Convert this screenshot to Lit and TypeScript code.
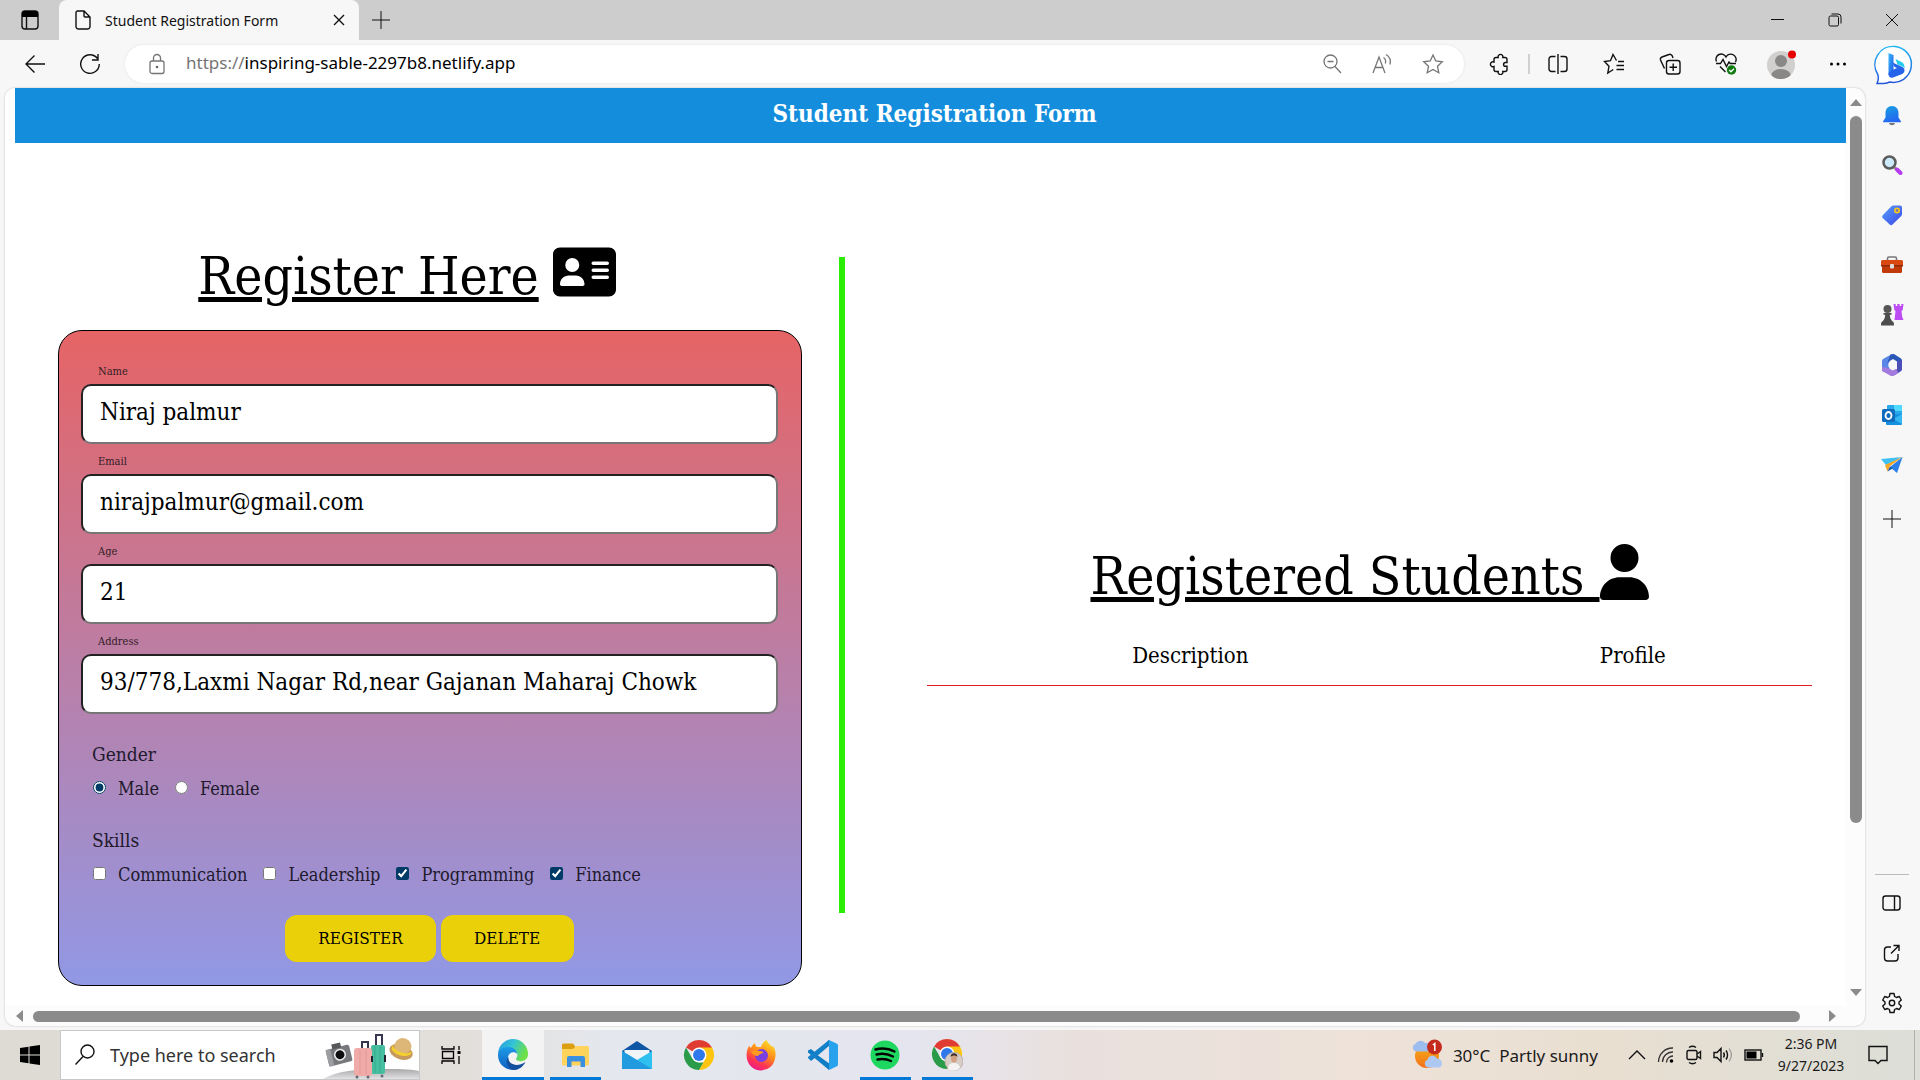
import { LitElement, html, svg, css, TemplateResult, SVGTemplateResult } from "lit";
import { customElement, state } from "lit/decorators.js";

const icon = (w: number, h: number, body: SVGTemplateResult): TemplateResult =>
  html`<svg class="icon" width=${w} height=${h} viewBox="0 0 ${w} ${h}" aria-hidden="true">${body}</svg>`;

/* ---------- browser chrome ---------- */
const tabActions = icon(20, 24, svg`<rect x="2" y="3" width="16" height="18" rx="3" class="ln"/><path d="M2 9V6a3 3 0 0 1 3-3h10a3 3 0 0 1 3 3v3z" fill="#000"/><path d="M6.5 9v12" class="ln"/>`);
const docIcon = icon(20, 24, svg`<path d="M4 3h7l6 6v9.5a2.5 2.5 0 0 1-2.5 2.500h-9A2.500 2.500 0 0 1 3 18.500V4.500A1.500 1.500 0 0 1 4.500 3zM11 3v5a1 1 0 0 0 1 1h5" class="ln"/>`);
const closeTab = icon(14, 14, svg`<path d="M2 2l10 10M12 2L2 12" class="ln"/>`);
const plusIcon = icon(18, 18, svg`<path d="M9 0v18M0 9h18" class="ln thin"/>`);
const minimize = icon(14, 14, svg`<path d="M0 6.500h13" class="ln thin"/>`);
const restore = icon(14, 14, svg`<rect x="1" y="3" width="9.500" height="10" rx="1.500" class="ln thin"/><path d="M3.500 1h6.500a3 3 0 0 1 3 3v6.500" class="ln thin"/>`);
const closeWin = icon(14, 14, svg`<path d="M1 1l12 12M13 1L1 13" class="ln thin"/>`);
const back = icon(22, 20, svg`<path d="M21 10H2M10.500 1.500L2 10l8.500 8.500" class="ln"/>`);
const refresh = icon(22, 24, svg`<path d="M18.500 6.500A9.300 9.300 0 1 0 20.300 12M19 2v6h-6" class="ln"/>`);
const lock = icon(18, 22, svg`<g class="gr"><rect x="2" y="8" width="14" height="12.500" rx="2"/><path d="M5.500 8V5a3.500 3.500 0 0 1 7 0v3"/></g><circle cx="9" cy="14" r="1.300" fill="#666"/>`);
const zoomOut = icon(20, 22, svg`<g class="gr"><circle cx="8.500" cy="8.500" r="6.500"/><path d="M13 13.500l6 6.500M5.500 8.500h6"/></g>`);
const readAloud = icon(22, 22, svg`<g class="gr"><path d="M2 20L8 4l6 16M4 14.500h8M12.500 4.500c2 1.500 2.500 4 1.800 6M15 1.500c4 2.500 5 6.500 4 10"/></g>`);
const starPath = "M11 2l2.800 6 6.500.8-4.800 4.500 1.300 6.500L11 16.500l-5.800 3.300 1.300-6.500L1.700 8.800 8.200 8z";
const star = icon(22, 22, svg`<path d=${starPath} class="gr"/>`);
const puzzle = icon(22, 22, svg`<path d="M7 4.500h2.200a2.400 2.400 0 1 1 4.600 0H16a2 2 0 0 1 2 2v3h-1.500a1.800 1.800 0 0 0 0 3.800H18v3.200a2 2 0 0 1-2 2h-2.200a2.400 2.400 0 1 1-4.600 0H7a2 2 0 0 1-2-2v-3a2.500 2.500 0 1 1 0-4.500V6.500a2 2 0 0 1 2-2z" class="ln"/>`);
const split = icon(20, 22, svg`<path d="M7.500 3.500h-4A2.500 2.500 0 0 0 1 6v10a2.500 2.500 0 0 0 2.500 2.500h4M12.500 3.500h4A2.500 2.500 0 0 1 19 6v10a2.500 2.500 0 0 1-2.500 2.500h-4M10 1v20" class="ln"/>`);
const favs = icon(22, 22, svg`<path d="M13.500 7.500L10 1.500 7.500 7.700 1.500 8.500l4.500 4.800L4.800 20l5.500-3.500M15 8.500h6M13.500 12.500H21M13.500 16.500H21" class="ln"/>`);
const collections = icon(22, 22, svg`<path d="M5.500 15.500L1.500 7A2.500 2.500 0 0 1 3 4l7-2.500a2.500 2.500 0 0 1 3.300 1.500l.7 2" class="ln"/><rect x="7.500" y="7.500" width="13.500" height="13.500" rx="2.500" class="ln"/><path d="M14.200 10.500v7.500M10.500 14.200H18" class="ln"/>`);
const heart = icon(22, 24, svg`<path d="M1.500 9.500A5 5 0 0 1 11 5a5 5 0 0 1 9.500 5M1 11.500h4.500l2.500-4 3.500 7 2.500-4.500 1.200 1.500H21M5 14.500l5.500 5.500" class="ln"/><circle cx="16.500" cy="18" r="4.700" fill="#107c10"/><path d="M14.300 18l1.700 1.700 2.900-3" fill="none" stroke="#fff" stroke-width="1.300"/>`);
const profile = icon(32, 32, svg`<defs><clipPath id="pc"><circle cx="15" cy="17" r="14"/></clipPath></defs><circle cx="15" cy="17" r="14" fill="#d2d0ce"/><g clip-path="url(#pc)" fill="#8a8886"><circle cx="15" cy="13" r="6"/><ellipse cx="15" cy="28" rx="10" ry="7"/></g><circle cx="26" cy="6.500" r="4" fill="#e80000"/>`);
const dots = icon(18, 6, svg`<circle cx="2.500" cy="3" r="1.500"/><circle cx="9" cy="3" r="1.500"/><circle cx="15.500" cy="3" r="1.500"/>`);

/* ---------- sidebar ---------- */
const bing = icon(44, 40, svg`<defs><linearGradient id="b1" x1="0" y1="0" x2="0" y2="1"><stop offset="0" stop-color="#1fb6f5"/><stop offset="1" stop-color="#2456d8"/></linearGradient><linearGradient id="b2" x1="0" y1="0" x2="1" y2="1"><stop offset="0" stop-color="#37bdff"/><stop offset="1" stop-color="#2052e0"/></linearGradient></defs><g transform="translate(5 0)"><path d="M20 1.500a18 18 0 1 1-5.500 35.500c-3.500 1.800-7 1.800-12.500 1.500 1.500-3.500 1.800-6 .8-9A18.200 18.200 0 0 1 20 1.500z" fill="#fff" stroke="url(#b1)" stroke-width="1.500"/><path d="M13.500 8l5 2v15.500l-5 4.500z" fill="url(#b2)"/><path d="M13.500 28l5-3.500 3.500-1.500-3-1.500-1.500-4 10 4.500c1.500.8 2 2 2 3.500s-1 2.800-2.200 3.500L18 32.500c-2.500 1-4.500-1-4.500-3.500z" fill="#2563e8"/><path d="M20.500 14l6 3c2 1 3.500 3 3 6.500-.5-1.200-1.500-2-3-2.500l-4-1.500z" fill="#24ccec"/></g>`);
const bell = icon(22, 24, svg`<defs><linearGradient id="bl" x1="0" y1="0" x2="0.300" y2="1"><stop offset="0" stop-color="#17a0e0"/><stop offset="1" stop-color="#2468f2"/></linearGradient></defs><path d="M11 3c4 0 6.500 3 6.500 7v4.500l2.500 4v.8H2v-.8l2.500-4V10c0-4 2.500-7 6.500-7z" fill="url(#bl)"/><path d="M8 20h6c-.5 3-5.500 3-6 0z" fill="#777"/>`);
const sSearch = icon(22, 22, svg`<path d="M13.500 13.500l1.500 1.500" stroke="#888" stroke-width="3"/><path d="M16 15.500l3.500 3.500" stroke="#b63cf2" stroke-width="4" stroke-linecap="round"/><circle cx="8.500" cy="8.500" r="6" fill="#cdeafa" stroke="#5c5c5c" stroke-width="2.500"/>`);
const tag = icon(22, 22, svg`<defs><linearGradient id="tg" x1="0" y1="0" x2="1" y2="1"><stop offset="0" stop-color="#55a0fa"/><stop offset="1" stop-color="#3d45e8"/></linearGradient></defs><path d="M12.500 1.500H19A2 2 0 0 1 21 3.500V10a3 3 0 0 1-1 2.300L11.500 20.500a2 2 0 0 1-2.800 0l-7-6.500a2 2 0 0 1 0-2.800l8.500-8.700a3 3 0 0 1 2.300-1z" fill="url(#tg)"/><circle cx="16" cy="6.500" r="2.200" fill="#7e75b8" stroke="#fbc916" stroke-width="1.600"/>`);
const toolbox = icon(24, 20, svg`<path d="M7.500 6V3.500A1.500 1.500 0 0 1 9 2h6a1.500 1.500 0 0 1 1.500 1.500V6" fill="none" stroke="#777" stroke-width="1.600"/><path d="M1 6.500A1.500 1.500 0 0 1 2.500 5h19A1.500 1.500 0 0 1 23 6.500V11H1z" fill="#d9480f"/><path d="M2 11h20v5.500a1.500 1.500 0 0 1-1.500 1.500h-17A1.500 1.500 0 0 1 2 16.500z" fill="#c23a0a"/><path d="M1 10h22v1.500H1z" fill="#8f2a06"/><rect x="10" y="9" width="4" height="4.500" rx="1" fill="#ddd"/>`);
const chess = icon(24, 24, svg`<path d="M13.500 1h2.200v2h1.600V1h2.400v2h1.600V1H23.500l-.8 6-1.200 1 .7 6 1.300 3h-9l1-9-1.200-1z" fill="#bd4cf5"/><circle cx="7.500" cy="6" r="4" fill="#555"/><path d="M3.500 10h8v1.800h-1.700c0 3 1.200 5.500 3.200 7 .8.700 1 1.700 1 3.700H1c0-2 .2-3 1-3.700 2-1.500 3.200-4 3.200-7H3.500z" fill="#4d4d4d"/>`);
const m365 = icon(22, 24, svg`<path d="M11 1l4 2.300L8.500 8v8L2 19 1 17V7.500L2 6z" fill="#5a86e8"/><path d="M9.500 1.500L13 1l7 4.500L21 7v8l-5-3V8.500l-4-2.500-3.500 2L6 11z" fill="#2a57b8"/><path d="M21 7v10l-1.500 1.500L13 22.500 9 21l7-5V8z" fill="#4b50b8"/><path d="M1 14l6.500 1 4 2.500 3.500-1.500 2.500 4L12 23h-2l-8-4.500-1-1.500z" fill="#a279dc"/><circle cx="11" cy="12" r="3.700" fill="#f7f7f7"/>`);
const outlook = icon(22, 22, svg`<rect x="6" y="1" width="15" height="12" rx="1" fill="#28a8ea"/><rect x="13" y="1" width="8" height="6" fill="#50d9ff"/><path d="M5 11l16-1v10a1 1 0 0 1-1 1H6a1 1 0 0 1-1-1z" fill="#1490df"/><path d="M12 15l9-5v10z" fill="#35b8f1"/><rect x="1" y="5" width="13" height="13" rx="1.500" fill="#0f6cbd"/><ellipse cx="7.500" cy="11.500" rx="3" ry="3.500" fill="none" stroke="#fff" stroke-width="1.800"/>`);
const plane = icon(22, 20, svg`<path d="M21.500 2L0 4l5 6z" fill="#3fc0f4"/><path d="M21.500 2L9 12l7 6z" fill="#2b7de9"/><path d="M21.500 2L4 10l2.500 6.500L9 11z" fill="#f5a623"/><path d="M6.500 16.500L9 11.500l2.500 2z" fill="#0f57a8"/>`);
const sidePanel = icon(20, 18, svg`<rect x="1" y="2" width="17" height="14" rx="2.500" class="ln"/><path d="M12.500 2v14" class="ln"/>`);
const openExt = icon(20, 20, svg`<path d="M9 4H5.500A3 3 0 0 0 2.500 7v8a3 3 0 0 0 3 3H13a3 3 0 0 0 3-3v-4M11.500 2.500H17V8M17 2.500l-8 8" class="ln"/>`);
const gear = icon(22, 22, svg`<path d="M9 1.500h4l.6 3 1.800 1 2.900-1 2 3.500-2.300 2v2l2.300 2-2 3.500-2.900-1-1.800 1-.6 3H9l-.6-3-1.800-1-2.900 1-2-3.500L4 12v-2L1.700 8l2-3.500 2.900 1 1.800-1z" class="ln" stroke-linejoin="round"/><circle cx="11" cy="11" r="2.700" class="ln"/>`);

/* ---------- page ---------- */
const idCard = html`<svg width="63" height="56" viewBox="0 0 576 512" aria-hidden="true"><path fill-rule="evenodd" d="M64 32C28.700 32 0 60.700 0 96V416c0 35.300 28.700 64 64 64H512c35.300 0 64-28.700 64-64V96c0-35.300-28.700-64-64-64H64zm80 256h64c44.200 0 80 35.800 80 80c0 8.800-7.200 16-16 16H80c-8.800 0-16-7.200-16-16c0-44.200 35.800-80 80-80zm-32-96a64 64 0 1 1 128 0 64 64 0 1 1-128 0zm256-32H496a16 16 0 0 1 0 32H368a16 16 0 0 1 0-32zm0 64H496a16 16 0 0 1 0 32H368a16 16 0 0 1 0-32zm0 64H496a16 16 0 0 1 0 32H368a16 16 0 0 1 0-32z"/></svg>`;
const person = html`<svg width="49" height="56" viewBox="0 0 448 512" aria-hidden="true"><path d="M224 256A128 128 0 1 0 224 0a128 128 0 1 0 0 256zm-45.700 48C79.800 304 0 383.800 0 482.300C0 498.700 13.300 512 29.700 512H418.300c16.400 0 29.700-13.300 29.700-29.700C448 383.800 368.200 304 269.700 304H178.300z"/></svg>`;

/* ---------- taskbar ---------- */
const start = icon(20, 20, svg`<path d="M0 3l8.500-1.200V9.500H0zM9.500 1.600L20 0v9.500H9.500zM0 10.500h8.500v7.700L0 17zM9.500 10.500H20V20L9.500 18.400z"/>`);
const tSearch = icon(22, 22, svg`<circle cx="13.500" cy="7.500" r="6.500" class="ln"/><path d="M9 12.500L1.500 20.500" class="ln"/>`);
const travel = icon(96, 48, svg`<defs><linearGradient id="hill" x1="0" y1="0" x2="0" y2="1"><stop offset="0" stop-color="#a9a9ab"/><stop offset="1" stop-color="#e2e2e4"/></linearGradient></defs><path d="M0 48c14-8 34-10 58-10 16 0 28 0 38 2v8z" fill="url(#hill)"/>
<g transform="rotate(-14 16 24)"><rect x="4" y="16" width="24" height="17" rx="2" fill="#77797c"/><rect x="11" y="12" width="9" height="5" fill="#55575a"/><rect x="4" y="16" width="5" height="17" fill="#9b9da0"/><circle cx="17" cy="24" r="6" fill="#ececec"/><circle cx="17" cy="24" r="4.500" fill="#0c0c0f"/></g>
<path d="M53 15V4h6v11" fill="none" stroke="#363650" stroke-width="2"/><rect x="48" y="14" width="14" height="29" rx="2" fill="#46bfa0"/><path d="M52 15v27M57 15v27" stroke="#3aa98d"/><path d="M39 19V11h6v8" fill="none" stroke="#363650" stroke-width="2"/><rect x="31" y="17" width="18" height="28" rx="3" fill="#f0aaa8"/><path d="M37 19v24M43 19v24" stroke="#e39a98"/><path d="M49 25v6M62 24v7" stroke="#223" stroke-width="2"/><circle cx="34" cy="46" r="1.500" fill="#667"/><circle cx="45" cy="46" r="1.500" fill="#667"/><circle cx="59" cy="45" r="1.500" fill="#667"/>
<g transform="rotate(18 79 18)"><ellipse cx="79" cy="21" rx="12" ry="7.500" fill="#c69a5c"/><ellipse cx="79" cy="15" rx="8.500" ry="8" fill="#ddb778"/><path d="M69 17c3 6 17 6 20 0v3c-3 6-17 6-20 1z" fill="#f5cf2e"/></g>`);
const taskView = icon(20, 20, svg`<path d="M1 1v3h12V1M1 19v-3h12v3M1.500 6.500h11v7h-11zM18 1v4M18 11v8" fill="none" stroke="#000" stroke-width="1.300"/><rect x="16.500" y="6" width="3" height="3"/>`);
const edge = icon(32, 32, svg`<defs><linearGradient id="e1" x1="0" y1="0" x2="1" y2="0.400"><stop offset="0" stop-color="#2796e0"/><stop offset="0.500" stop-color="#33c3d8"/><stop offset="1" stop-color="#6ee048"/></linearGradient><linearGradient id="e2" x1="0" y1="0" x2="0" y2="1"><stop offset="0" stop-color="#1d9be8"/><stop offset="1" stop-color="#0f5fc0"/></linearGradient></defs><path d="M1 15A15 15 0 0 1 31 15c.2 5-4 7.500-8 7.200-3-.2-5-1.500-3.500-3.200C22 15 19 11 14 11 8 11 2 12 1 15z" fill="url(#e1)"/><path d="M1 16c0-4 4-8 10-8 5 0 9 3 9 7-2-3-9-2-9 4 0 6 5 9 10 11-8 3-20-2-20-14z" fill="url(#e2)"/><path d="M11.500 18c-1 7 8 11 17 5-2.500 5-7 8-12 8-6-1-9-9-5-13z" fill="#124f9c"/>`);
const explorer = icon(30, 28, svg`<path d="M2 4a1.500 1.500 0 0 1 1.500-1.500H13L15 5v4H2z" fill="#dd9f10"/><path d="M2 8h11l3-3h11.500A1.500 1.500 0 0 1 29 6.500V23a1.500 1.500 0 0 1-1.500 1.500h-24A1.500 1.500 0 0 1 2 23z" fill="#ffd35c"/><path d="M7 26V17a2 2 0 0 1 2-2h14a2 2 0 0 1 2 2v9h-4.500v-5.500h-9V26z" fill="#3b8fe0"/>`);
const mail = icon(32, 30, svg`<path d="M1 11L16 1l15 10v3H1z" fill="#0f57a4"/><path d="M3.500 10h25v10h-25z" fill="#f2f5f8"/><path d="M1 11l15 9 15-9v18H1z" fill="#2fc0f0"/><path d="M1 11l30 18H1z" fill="#219ae0"/>`);
const chromeBody = svg`<path d="M16 16L3 8.500A15 15 0 0 1 29 8.500z" fill="#e03c31"/><path d="M16 8.500h13A15 15 0 0 1 16 31l6.500-11.500z" fill="#fdc50f"/><path d="M3 8.500L9.500 19.700 16 23.500h4.300L16 31A15 15 0 0 1 3 8.500z" fill="#2a9b48"/><circle cx="16" cy="16" r="7.500" fill="#fff"/><circle cx="16" cy="16" r="6" fill="#2f78ec"/>`;
const chrome = icon(32, 32, chromeBody);
const chromeUser = icon(32, 34, svg`${chromeBody}<circle cx="23" cy="23.500" r="9" fill="#d8cdc6" stroke="#b8b0aa"/><path d="M17 31c0-5 3-6 6-6s6 2 6 5a9 9 0 0 1-12 1z" fill="#f4f2f2"/><ellipse cx="23" cy="20.500" rx="3" ry="4" fill="#d2a184"/><path d="M19.500 19c0-5 7-5 7 0-2-2-5-2-7 0z" fill="#3a2a26"/>`);
const firefox = icon(32, 32, svg`<defs><linearGradient id="f1" x1="0.800" y1="0" x2="0.300" y2="1"><stop offset="0" stop-color="#ffe226"/><stop offset="0.450" stop-color="#ff8a1c"/><stop offset="0.750" stop-color="#ff3750"/><stop offset="1" stop-color="#e8178a"/></linearGradient></defs><path d="M4 7l2 2c1-3 3-4 4-5 0 2 1 3 2 4h4c1-3 3-6 6-7 0 3 3 4 5 7l1-1c3 4 3 9 2 13a14.300 14.300 0 0 1-28 0C1 15 2 10 4 7z" fill="url(#f1)"/><circle cx="16.500" cy="16.500" r="6.500" fill="#7a3fe0"/><path d="M6 12c3-1 6-1 8 0 3 0 5 1 4 2-2 1-4 1-5 3-2 0-6-1-7-5z" fill="#ff9a20"/>`);
const vscode = icon(32, 32, svg`<path d="M22 1l-13 13-5-4-3 1.500v2L22 31l1-6-14-10 14-9z" fill="#0f7cc4"/><path d="M1 19l3 3 5-4L23 6l-1-5L1 18z" fill="#1380c8"/><path d="M22 1l7.500 3.500A2 2 0 0 1 31 6.500v19a2 2 0 0 1-1.500 2L22 31z" fill="#29a2ee"/>`);
const spotify = icon(30, 30, svg`<circle cx="15" cy="15" r="14.500" fill="#1ed760"/><path d="M5.500 9.500c7-2 13.500-1 19 2M6.500 14.500c6-1.500 11.500-.8 16.500 2M7.500 19.500c5-1 9-.7 13.500 1.500" fill="none" stroke="#000" stroke-width="2.400" stroke-linecap="round"/>`);
const weather = icon(32, 32, svg`<defs><linearGradient id="sun" x1="0" y1="0" x2="0" y2="1"><stop offset="0" stop-color="#f6b216"/><stop offset="1" stop-color="#f2701c"/></linearGradient></defs><circle cx="15" cy="17" r="12" fill="url(#sun)"/><path d="M4 12.500a4 4 0 0 1-.5-7.700A5.500 5.500 0 0 1 13 4a4 4 0 0 1 3 8.500z" fill="#9dbdee"/><path d="M16 28.500a4 4 0 0 1-.5-7.700 5 5 0 0 1 9.500-1 4.500 4.500 0 0 1 2 8.700z" fill="#adc9f3"/><circle cx="22.500" cy="8" r="7.500" fill="#c42b1c"/><path d="M20.800 6l2-1.500V12" fill="none" stroke="#fff" stroke-width="1.500"/>`);
const chevron = icon(18, 12, svg`<path d="M1 10l8-8 8 8" class="ln"/>`);
const wifi = icon(18, 18, svg`<path d="M1.500 16A14 14 0 0 1 16 2M5.500 16A10 10 0 0 1 16 6M9.500 16.500A6.500 6.500 0 0 1 16 10" fill="none" stroke="#333" stroke-width="1.300"/><circle cx="14.500" cy="15" r="1.800"/>`);
const meet = icon(16, 20, svg`<rect x="1" y="5.500" width="10" height="9" rx="1.500" class="ln"/><path d="M11 9l3.500-2.500v7L11 11M3 2.500c2-1.500 5-1.500 7 0M3 17.500c2 1.500 5 1.500 7 0" class="ln"/>`);
const volume = icon(20, 18, svg`<path d="M1 6.500h3L8 2.500v13l-4-4H1zM10.500 6.500c1 1.500 1 3.500 0 5M13 4.500c2 2.500 2 6.500 0 9" class="ln"/><path d="M16 2.500c3 4 3 9 0 13" fill="none" stroke="#999" stroke-width="1.200"/>`);
const battery = icon(20, 14, svg`<rect x="1" y="2" width="16" height="10" class="ln"/><rect x="2.500" y="3.500" width="10" height="7"/><path d="M18.500 5v4" class="ln"/>`);
const notif = icon(20, 20, svg`<path d="M1 1.500h18v14h-6L10 18.500l-3-3H1z" class="ln"/>`);

const base = css`
  * { box-sizing: border-box; }
  .icon { display: block; flex: none; }
  .ln { fill: none; stroke: #111; stroke-width: 1.400; }
  .thin { stroke-width: 1; }
  .gr { fill: none; stroke: #757575; stroke-width: 1.300; }
  button { font: inherit; color: inherit; border: 0; background: none; padding: 0; display: flex; align-items: center; justify-content: center; }
`;

@customElement("registration-page")
class RegistrationPage extends LitElement {
  static styles = [base, css`
    :host { display: block; font-family: "DejaVu Serif Condensed", "DejaVu Serif", serif; color: #000; }
    .banner { margin: 0 0 0 10px; height: 55px; padding-left: 8px; background: #148edc; color: #fff; text-align: center; font-size: 24px; line-height: 52px; font-weight: 700; }
    .columns { display: grid; grid-template-columns: 744fr auto 885fr; align-items: center; padding: 103px 34px 20px 53px; }
    .rule { width: 6px; height: 656px; margin: 0 82px 63px 37px; background: #2bee07; }
    h2 { margin: 0; height: 60px; font-size: 53px; line-height: 60px; font-weight: 400; display: flex; justify-content: center; align-items: center; }
    h2 span { text-decoration: underline; white-space: pre; text-decoration-thickness: 5px; text-underline-offset: 3px; }
    h2 svg { margin-bottom: 8px; flex: none; }
    .left h2 { gap: 14px; padding-right: 46px; margin-bottom: 24px; }
    form { display: block; border: 1px solid #000; border-radius: 24px; padding: 26px 23px 23px 22px; background: linear-gradient(#e66465, #9198e5); }
    .field { display: block; height: 90px; }
    .field label { display: block; height: 27px; padding: 5px 0 0 17px; font-size: 11px; line-height: 20px; color: #321c26; }
    .field input { display: block; width: 100%; height: 60px; border: 2px solid; border-color: #222 #767676 #767676 #222; border-radius: 10px; padding: 0 17px 4px; background: #fff; font-family: inherit; font-size: 24px; color: #000; }
    fieldset { border: 0; margin: 0; padding: 0 0 0 11px; height: 86px; color: #211a2c; }
    .first { margin-top: 22px; }
    legend { padding: 0; font-size: 19px; line-height: 30px; margin-bottom: 6px; }
    .options { display: flex; gap: 16px; padding-left: 1px; font-size: 18px; line-height: 28px; }
    .options label { display: flex; gap: 12px; }
    .options input { width: 13px; height: 13px; margin: 6px 0 0; accent-color: #003a66; }
    .actions { display: flex; justify-content: center; gap: 5px; padding-top: 4px; }
    .actions button { height: 47px; min-width: 133px; padding: 0 33px 2px; border-radius: 12px; background: #e9d008; color: #000; font-size: 17px; }
    table { width: 100%; margin-top: 22px; border-collapse: collapse; table-layout: fixed; }
    th { padding: 13px 0 14px; font-size: 22px; line-height: 30px; font-weight: 400; border-bottom: 1px solid #e01b24; }
    .desc { width: 59.500%; }
  `];

  private fields = [
    ["name", "Name", "Niraj palmur", "text"],
    ["email", "Email", "nirajpalmur@gmail.com", "email"],
    ["age", "Age", "21", "text"],
    ["address", "Address", "93/778,Laxmi Nagar Rd,near Gajanan Maharaj Chowk", "text"],
  ];

  @state() private skills = [
    { name: "Communication", on: false },
    { name: "Leadership", on: false },
    { name: "Programming", on: true },
    { name: "Finance", on: true },
  ];

  render() {
    return html`
      <header class="banner">Student Registration Form</header>
      <main class="columns">
        <section class="left">
          <h2><span>Register Here</span>${idCard}</h2>
          <form @submit=${(e: Event) => e.preventDefault()}>
            ${this.fields.map(([id, label, value, type]) => html`
              <div class="field">
                <label for=${id}>${label}</label>
                <input id=${id} type=${type} .value=${value} />
              </div>`)}
            <fieldset class="first">
              <legend>Gender</legend>
              <div class="options">
                <label><input type="radio" name="gender" checked />Male</label>
                <label><input type="radio" name="gender" />Female</label>
              </div>
            </fieldset>
            <fieldset>
              <legend>Skills</legend>
              <div class="options">
                ${this.skills.map((s) => html`<label><input type="checkbox" .checked=${s.on} />${s.name}</label>`)}
              </div>
            </fieldset>
            <div class="actions">
              <button type="submit">REGISTER</button>
              <button type="reset">DELETE</button>
            </div>
          </form>
        </section>
        <div class="rule"></div>
        <section>
          <h2><span>Registered Students </span>${person}</h2>
          <table>
            <thead><tr><th class="desc" scope="col">Description</th><th scope="col">Profile</th></tr></thead>
          </table>
        </section>
      </main>`;
  }
}

@customElement("task-bar")
class TaskBar extends LitElement {
  static styles = [base, css`
    :host { display: flex; height: 50px; flex: none; align-items: stretch; color: #1a1a1a; background: linear-gradient(90deg, #dddbd3 0, #e2deda 24%, #e4e8ee 32%, #e5e5ef 48%, #e9e0dd 56%, #eee2d8 72%, #e9dfd1 83%, #dcded7 100%); }
    .start { width: 60px; }
    .search { width: 360px; display: flex; align-items: center; background: #fff; border: 1px solid #c8c8c8; padding-left: 13px; overflow: hidden; }
    .search input { flex: 1; min-width: 0; border: 0; outline: 0; padding: 0 0 0 14px; background: none; font: inherit; font-size: 18px; }
    .search input::placeholder { color: #333; opacity: 1; }
    .tile { width: 62px; flex: none; position: relative; }
    .active { background: #f3f3f3; }
    .open::after { content: ""; position: absolute; left: 6px; right: 5px; bottom: 0; height: 3px; background: #0078d7; }
    .active::after { left: 0; right: 0; }
    .tray { margin-left: auto; display: flex; align-items: center; }
    .weather { gap: 9px; margin-right: 30px; font-size: 17px; white-space: pre; }
    .icons { display: flex; align-items: center; gap: 11px; }
    .clock { width: 80px; margin-left: 7px; flex-direction: column; font-size: 14px; line-height: 22px; }
    .notif { margin-left: 17px; width: 20px; }
    .peek { width: 6px; align-self: stretch; border-left: 1px solid #aeb0aa; margin-left: 26px; }
  `];

  render() {
    const apps: [string, TemplateResult, string][] = [
      ["Microsoft Edge", edge, "open active"], ["File Explorer", explorer, "open"], ["Mail", mail, ""],
      ["Google Chrome", chrome, ""], ["Firefox", firefox, ""], ["Visual Studio Code", vscode, ""],
      ["Spotify", spotify, "open"], ["Chrome profile", chromeUser, "open"],
    ];
    return html`
      <button class="start" aria-label="Start">${start}</button>
      <label class="search">${tSearch}<input type="text" aria-label="Search" placeholder="Type here to search" />${travel}</label>
      <button class="tile" aria-label="Task view">${taskView}</button>
      ${apps.map(([name, art, mode]) => html`<button class="tile ${mode}" aria-label=${name}>${art}</button>`)}
      <div class="tray">
        <button class="weather">${weather}<span>30°C  Partly sunny</span></button>
        <div class="icons">${[chevron, wifi, meet, volume, battery].map((i) => html`<button>${i}</button>`)}</div>
        <button class="clock"><span>2:36 PM</span><span>9/27/2023</span></button>
        <button class="notif" aria-label="Notifications">${notif}</button>
        <div class="peek"></div>
      </div>`;
  }
}

@customElement("app-root")
class AppRoot extends LitElement {
  static styles = [base, css`
    :host { display: flex; flex-direction: column; height: 100vh; overflow: hidden; background: #f7f7f7; font-family: "Noto Sans", "Open Sans", sans-serif; color: #111; }
    task-bar { font-family: inherit; }
    .tabs { height: 40px; flex: none; display: flex; align-items: stretch; background: #cdcdcd; }
    .tabacts { width: 59px; }
    .tab { width: 300px; display: flex; align-items: center; gap: 12px; padding: 0 13px 0 14px; background: #f7f7f7; border-radius: 8px 8px 0 0; font-size: 14px; }
    .tab span { flex: 1; white-space: nowrap; }
    .new { width: 44px; }
    .win { margin-left: auto; display: flex; }
    .win button { width: 57px; }
    .body { flex: 1; min-height: 0; display: flex; }
    .main { flex: 1; min-width: 0; display: flex; flex-direction: column; }
    .toolbar { height: 48px; flex: none; display: flex; align-items: center; }
    .nav { width: 40px; }
    .back { width: 70px; }
    .address { flex: 1; min-width: 0; height: 38px; display: flex; align-items: center; gap: 20px; margin-left: 15px; padding: 0 20px 0 23px; background: #fff; border-radius: 19px; box-shadow: 0 0 3px #e4e4e4; font-size: 17px; line-height: 22px; }
    .address a { flex: 1; color: #000; text-decoration: none; padding-bottom: 2px; }
    .address a span { color: #757575; }
    .address .tools { display: flex; gap: 29px; }
    .ext { display: flex; align-items: center; padding-left: 8px; }
    .ext button { width: 56px; }
    .sep { width: 2px; height: 20px; background: #d0d0d0; }
    .frame { flex: 1; min-height: 0; margin: 0 1px 4px 5px; display: grid; grid-template-columns: minmax(0, 1fr) 19px; grid-template-rows: minmax(0, 1fr) 20px; background: #fcfcfc; border-radius: 10px; overflow: hidden; box-shadow: 0 0 2px #b5b5b5; }
    .view { background: #fff; overflow: hidden; }
    .vbar { display: flex; flex-direction: column; align-items: center; }
    .hbar { display: flex; align-items: center; }
    .arrow { flex: none; width: 28px; height: 28px; display: flex; align-items: center; justify-content: center; }
    .arrow svg { fill: #8b8b8b; display: block; }
    .vtrack { flex: 1; width: 12px; }
    .htrack { flex: 1; height: 11px; }
    .thumb { background: #8b8b8b; border-radius: 6px; }
    .vtrack .thumb { height: 82%; }
    .htrack .thumb { height: 100%; width: 99%; }
    .side { width: 54px; flex: none; display: flex; flex-direction: column; padding: 0 2px 2px 0; }
    .side button { height: 50px; flex: none; }
    .side .add { margin-top: 4px; }
    .side hr { width: 34px; margin: auto auto 3px; border: 0; border-top: 1px solid #bbb; }
  `];

  render() {
    return html`
      <div class="tabs">
        <button class="tabacts" aria-label="Tab actions">${tabActions}</button>
        <div class="tab">${docIcon}<span>Student Registration Form</span><button aria-label="Close tab">${closeTab}</button></div>
        <button class="new" aria-label="New tab">${plusIcon}</button>
        <div class="win">${[minimize, restore, closeWin].map((i) => html`<button>${i}</button>`)}</div>
      </div>
      <div class="body">
        <div class="main">
          <div class="toolbar">
            <button class="back" aria-label="Back">${back}</button>
            <button class="nav" aria-label="Refresh">${refresh}</button>
            <div class="address">
              ${lock}
              <a href="https://inspiring-sable-2297b8.netlify.app"><span>https://</span>inspiring-sable-2297b8.netlify.app</a>
              <div class="tools">${[zoomOut, readAloud, star].map((i) => html`<button>${i}</button>`)}</div>
            </div>
            <div class="ext">
              <button aria-label="Extensions">${puzzle}</button><div class="sep"></div>
              ${[split, favs, collections, heart, profile, dots].map((i) => html`<button>${i}</button>`)}
            </div>
          </div>
          <div class="frame">
            <div class="view"><registration-page></registration-page></div>
            <div class="vbar" aria-hidden="true">
              <div class="arrow"><svg width="12" height="7"><path d="M0 7l6-7 6 7z"/></svg></div>
              <div class="vtrack"><div class="thumb"></div></div>
              <div class="arrow"><svg width="12" height="7"><path d="M0 0l6 7 6-7z"/></svg></div>
            </div>
            <div class="hbar" aria-hidden="true">
              <div class="arrow"><svg width="7" height="12"><path d="M7 0L0 6l7 6z"/></svg></div>
              <div class="htrack"><div class="thumb"></div></div>
              <div class="arrow"><svg width="7" height="12"><path d="M0 0l7 6-7 6z"/></svg></div>
            </div>
          </div>
        </div>
        <nav class="side">
          ${[bing, bell, sSearch, tag, toolbox, chess, m365, outlook, plane].map((i) => html`<button>${i}</button>`)}
          <button class="add" aria-label="Customize">${plusIcon}</button>
          <hr />
          ${[sidePanel, openExt, gear].map((i) => html`<button>${i}</button>`)}
        </nav>
      </div>
      <task-bar></task-bar>`;
  }
}
